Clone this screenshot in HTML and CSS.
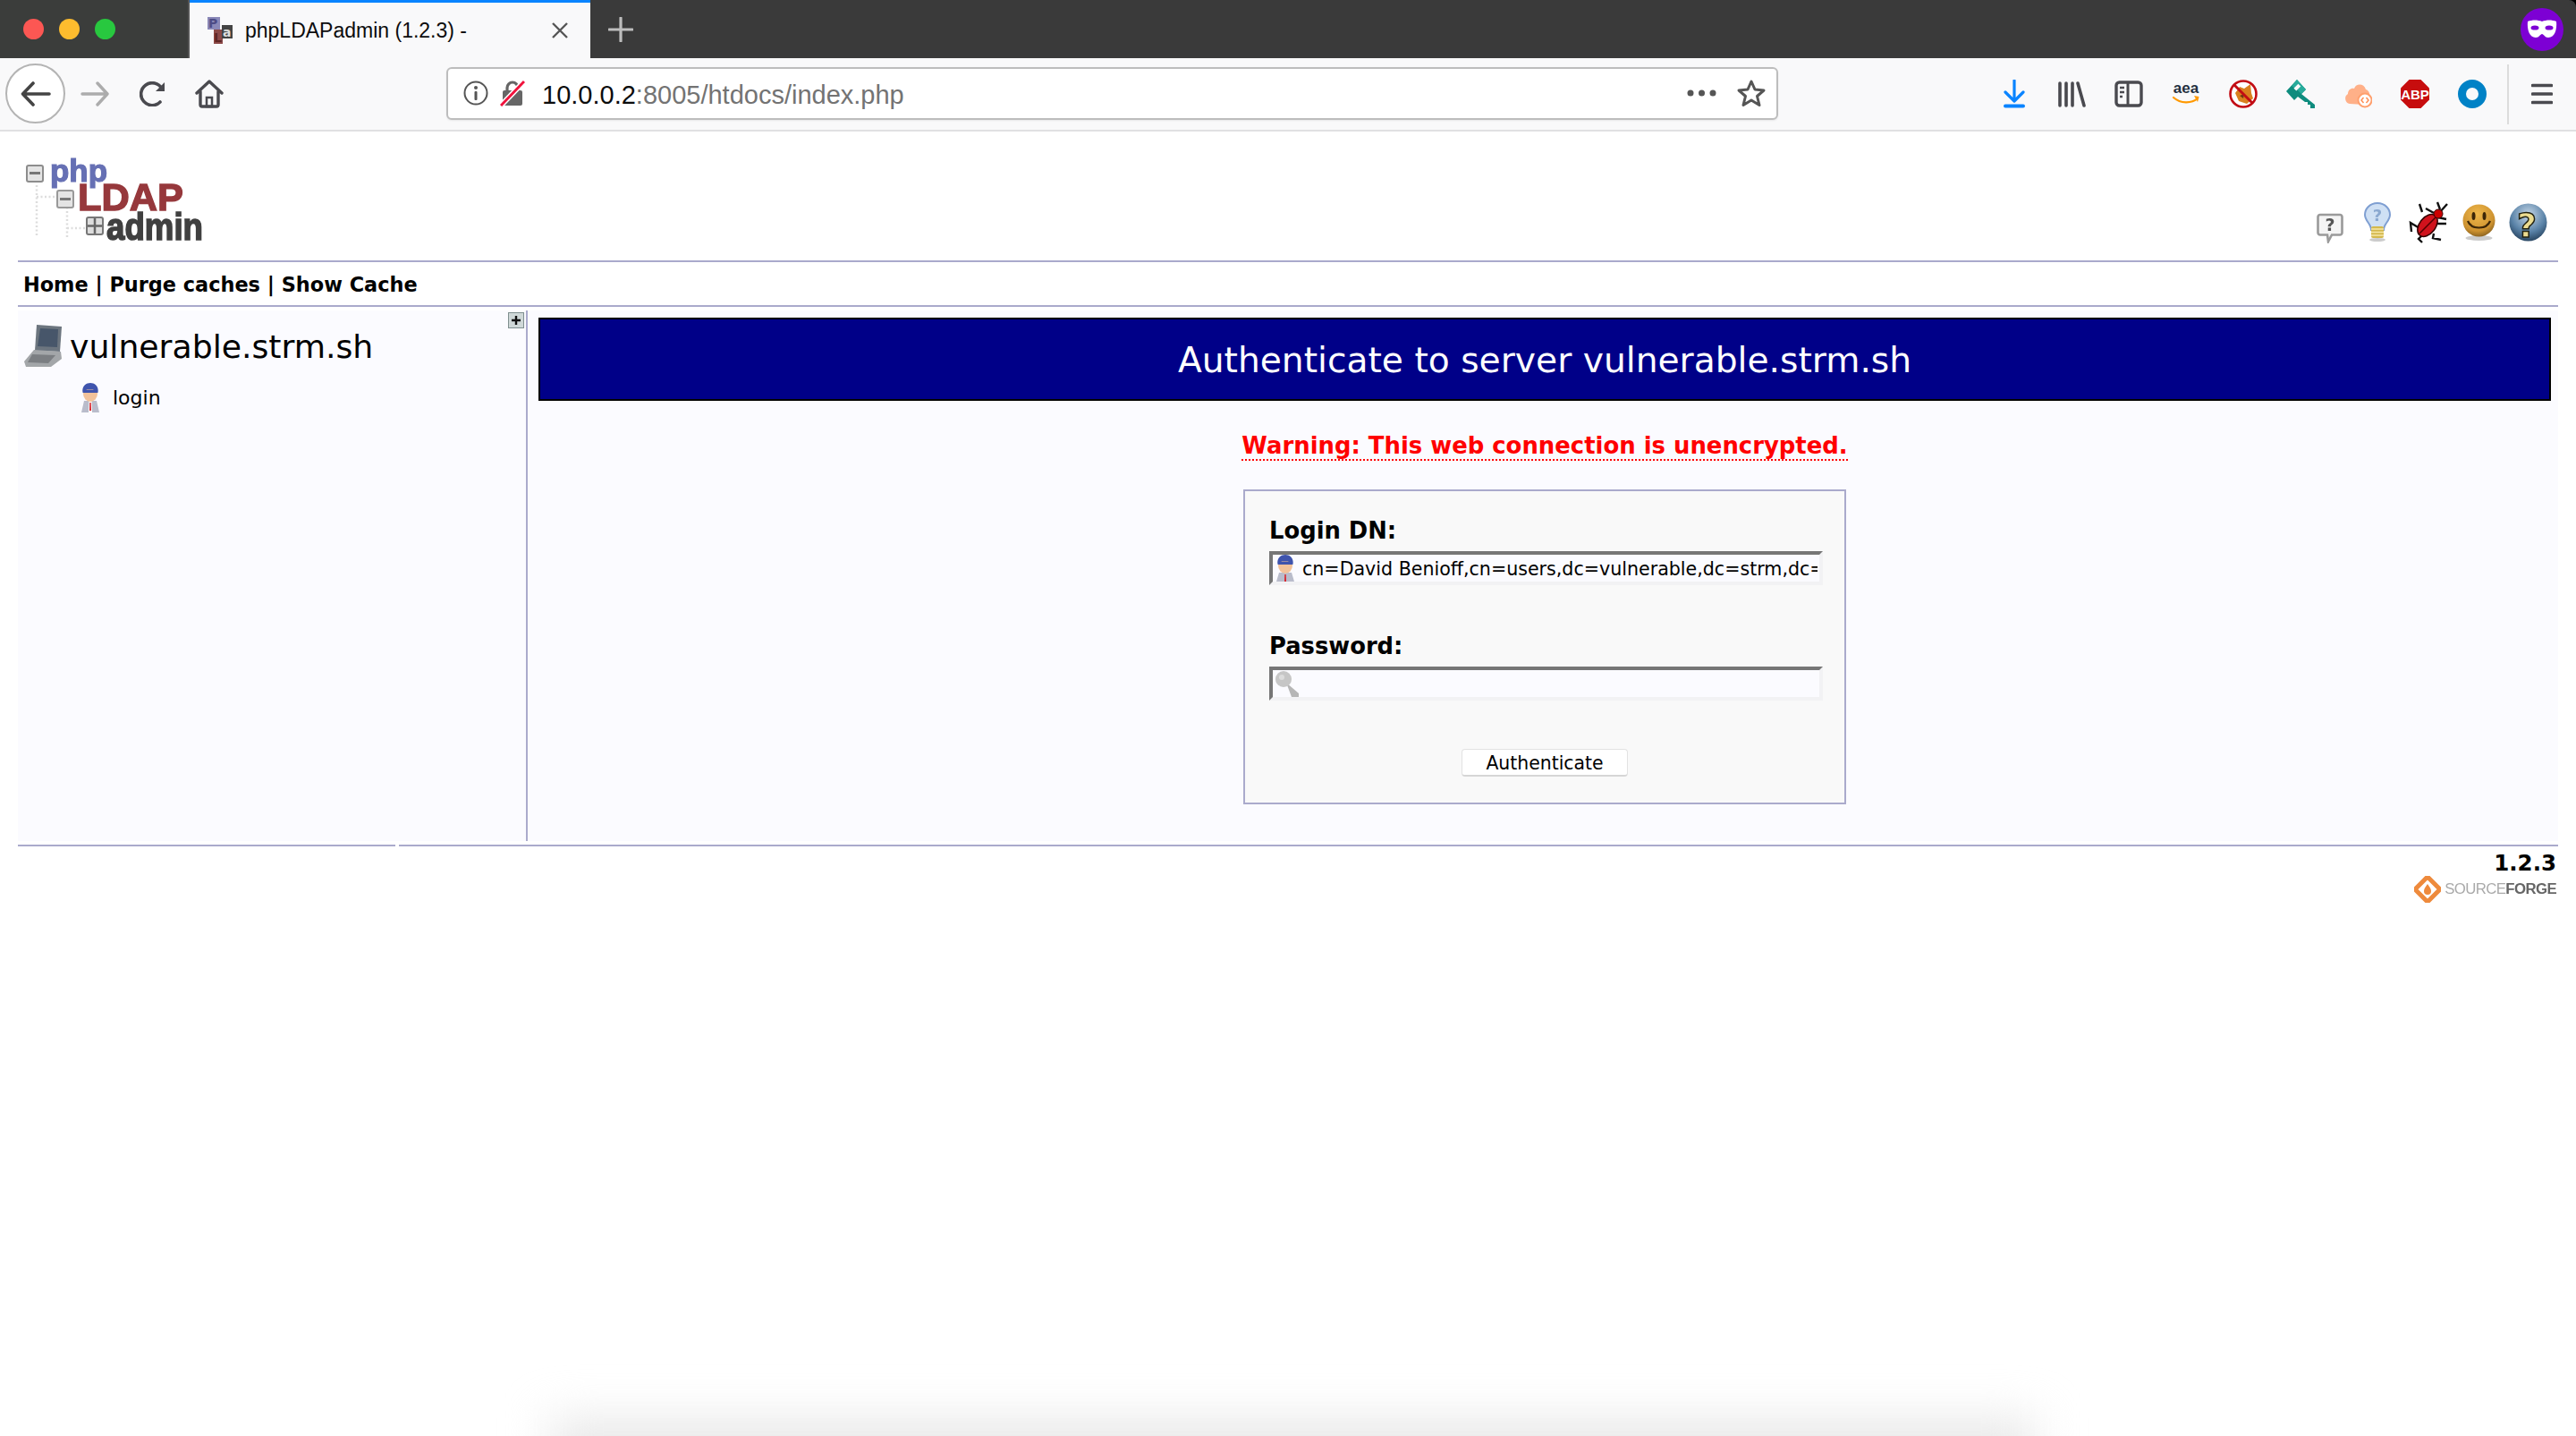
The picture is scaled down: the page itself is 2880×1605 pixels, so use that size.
FILE: index.html
```html
<!DOCTYPE html>
<html lang="en">
<head>
<meta charset="utf-8">
<title>phpLDAPadmin (1.2.3) -</title>
<link rel="stylesheet" href="styles.css">
</head>
<body>
<div class="window">
  <header class="tabbar">
    <div class="lights"><span class="light red"></span><span class="light yellow"></span><span class="light green"></span></div>
    <div class="tab">
      <svg class="favicon" width="28" height="30" viewBox="0 0 28 30"><rect x="0" y="0" width="14" height="14" fill="#8a88b8"/><text x="1" y="12" class="fav-t" fill="#4d4c86">P</text><rect x="7" y="14" width="10" height="16" fill="#8c4a48"/><text x="7" y="28" class="fav-t" fill="#5f2624">L</text><rect x="16" y="9" width="12" height="15" fill="#444"/><text x="17" y="22" class="fav-t" fill="#ddd">a</text></svg>
      <span class="tab-title">phpLDAPadmin (1.2.3) -</span>
      <svg class="tab-close" width="20" height="20" viewBox="0 0 20 20"><path d="M2 2 18 18M18 2 2 18" stroke="#555" stroke-width="2.4" fill="none"/></svg>
    </div>
    <svg class="newtab" width="28" height="28" viewBox="0 0 28 28"><path d="M14 1V27M1 14H27" stroke="#bdbdbd" stroke-width="3.2" stroke-linecap="round"/></svg>
    <svg class="mask" width="48" height="48" viewBox="0 0 48 48"><circle cx="24" cy="24" r="24" fill="#7d00d4"/><path d="M8 15c5-2 11-2 16 0 5-2 11-2 16 0 1 9-2 18-9 18-4 0-5-4-7-4s-3 4-7 4C10 33 7 24 8 15Z" fill="#fff"/><ellipse cx="16" cy="22" rx="4.5" ry="2.6" fill="#7d00d4"/><ellipse cx="32" cy="22" rx="4.5" ry="2.6" fill="#7d00d4"/></svg>
  </header>

  <nav class="toolbar">
    <div class="nav-buttons">
      <span class="back"><svg width="34" height="28" viewBox="0 0 34 28"><path d="M3 14H32M14 2 2.500 14 14 26" stroke="#444" stroke-width="3.600" fill="none" stroke-linecap="round" stroke-linejoin="round"/></svg></span>
      <svg class="ic-forward" width="32" height="28" viewBox="0 0 32 28"><path d="M30 14H2M19 2 30 14 19 26" stroke="#acacac" stroke-width="3.400" fill="none" stroke-linecap="round" stroke-linejoin="round"/></svg>
      <svg class="ic-reload" width="30" height="28" viewBox="0 0 30 28"><path d="M23 23a12.500 12.500 0 1 1 2-15" stroke="#4a4a4f" stroke-width="3.600" fill="none" stroke-linecap="round"/><path d="M28 1V11H18Z" fill="#4a4a4f"/></svg>
      <svg class="ic-home" width="32" height="32" viewBox="0 0 32 32"><path d="M2 15 16 2 30 15M6 13V28a2 2 0 0 0 2 2H24a2 2 0 0 0 2-2V13" stroke="#4a4a4f" stroke-width="3.400" fill="none" stroke-linecap="round" stroke-linejoin="round"/><rect x="13" y="20" width="6" height="10" fill="none" stroke="#4a4a4f" stroke-width="2.500"/></svg>
    </div>
    <div class="urlbar">
      <svg class="ic-info" width="28" height="28" viewBox="0 0 28 28"><circle cx="14" cy="14" r="12.500" fill="none" stroke="#555" stroke-width="2"/><circle cx="14" cy="8" r="2" fill="#555"/><rect x="12.500" y="12" width="3" height="10" rx="1" fill="#555"/></svg>
      <svg class="ic-lock" width="28" height="30" viewBox="0 0 28 30"><path d="M8 13V9a6 6 0 0 1 12 0v4" fill="none" stroke="#666" stroke-width="3.200"/><rect x="3" y="12" width="22" height="17" rx="2" fill="#666"/><path d="M1 29 27 2" stroke="#fff" stroke-width="6"/><path d="M1 29 27 2" stroke="#f0123c" stroke-width="3"/></svg>
      <span class="url"><span class="url-host">10.0.0.2</span>:8005/htdocs/index.php</span>
      <svg class="ic-dots" width="33" height="8" viewBox="0 0 33 8"><circle cx="4" cy="4" r="3.500" fill="#555"/><circle cx="16.500" cy="4" r="3.500" fill="#555"/><circle cx="29" cy="4" r="3.500" fill="#555"/></svg>
      <svg class="ic-star" width="34" height="32" viewBox="0 0 34 32"><path d="M17 3 21 12 31 13 23.500 19.500 26 29.500 17 24 8 29.500 10.500 19.500 3 13 13 12Z" fill="none" stroke="#555" stroke-width="3" stroke-linejoin="round"/></svg>
    </div>
    <div class="tools">
      <svg width="32" height="32" viewBox="0 0 32 32"><path d="M16 1V23M6 14 16 24 26 14" stroke="#0a84ff" stroke-width="3.200" fill="none" stroke-linecap="round" stroke-linejoin="round"/><rect x="4" y="27.500" width="24" height="4" rx="2" fill="#0a84ff"/></svg>
      <svg width="32" height="32" viewBox="0 0 32 32"><path d="M3 4V29M10 4V29M17 4V29M23 4 30 29" stroke="#4a4a4f" stroke-width="3.600" stroke-linecap="round"/></svg>
      <svg width="32" height="32" viewBox="0 0 32 32"><rect x="2" y="3" width="28" height="26" rx="3.500" fill="none" stroke="#4a4a4f" stroke-width="3.400"/><path d="M15 3V29" stroke="#4a4a4f" stroke-width="3"/><path d="M6 9H11M6 14H11M6 19H9" stroke="#4a4a4f" stroke-width="2.400"/></svg>
      <svg width="32" height="32" viewBox="0 0 32 32"><text x="16" y="15" class="aea">aea</text><path d="M2 20c8 7 20 7 27 1" stroke="#ff9900" stroke-width="2.200" fill="none" stroke-linecap="round"/><path d="M25 18 30.500 19 29 25Z" fill="#ff9900"/></svg>
      <svg width="32" height="32" viewBox="0 0 32 32"><circle cx="16" cy="16" r="14.500" fill="#fff" stroke="#c20c14" stroke-width="2.600"/><path d="M7 15 12 8 17 10 24 5 25 15 27 21 20 27 11 24Z" fill="#d9801f"/><path d="M12 18 17 16 16 21Z" fill="#6b3a10"/><path d="M6 6 26 26" stroke="#c20c14" stroke-width="3"/></svg>
      <svg width="32" height="32" viewBox="0 0 32 32"><path d="M0 13 12 0 22 11 17 16 32 28V32H27V28H24V25H21L13 19 9 23Z" fill="#0e8c7e"/><path d="M6 7 12 0 22 11 17 16 12 11Z" fill="#27ab9b"/><rect x="9" y="7" width="7" height="4" transform="rotate(-45 12 9)" fill="#f9f9fa"/></svg>
      <svg width="32" height="32" viewBox="0 0 32 32"><path d="M7 27a6 6 0 0 1-2-11c0-5 4-7 7-6 2-6 11-6 13 1 4 1 5 6 4 9l-6 8Z" fill="#ffb088"/><circle cx="24" cy="23" r="7.500" fill="#fff" stroke="#ffa06e" stroke-width="2"/><path d="M22.500 20 20 23l2.500 3M25.500 20l2.500 3-2.500 3" fill="none" stroke="#ff8f55" stroke-width="1.500"/></svg>
      <svg width="32" height="32" viewBox="0 0 32 32"><path d="M9.500 0H22.500L32 9.500V22.500L22.500 32H9.500L0 22.500V9.500Z" fill="#c70d0e"/><text x="16" y="22" class="abp">ABP</text></svg>
      <svg width="32" height="32" viewBox="0 0 32 32"><circle cx="16" cy="16" r="11.500" fill="none" stroke="#0082c6" stroke-width="9"/></svg>
      <span class="sep"></span>
      <svg class="hamb" width="24" height="24" viewBox="0 0 24 24"><path d="M1.500 2.500H22.500M1.500 12H22.500M1.500 21.500H22.500" stroke="#4a4a4f" stroke-width="3.600" stroke-linecap="round"/></svg>
    </div>
  </nav>

  <main class="page">
    <section class="pagehead">
      <div class="logo">
        <svg width="210" height="95" viewBox="0 0 210 95">
          <path d="M12 30V88M46 50V88M12 43H34M46 78H68" stroke="#ddd" stroke-width="2.500" stroke-dasharray="2 2.500" fill="none"/>
          <rect x="1" y="8" width="18" height="18" rx="2" fill="#e4e4e4" stroke="#8d8d8d" stroke-width="2"/><rect x="4" y="15" width="12" height="3" fill="#777"/>
          <rect x="35" y="36" width="18" height="19" rx="2" fill="#e4e4e4" stroke="#999" stroke-width="2"/><rect x="38" y="44" width="12" height="3" fill="#777"/>
          <rect x="68" y="66" width="18" height="19" rx="2" fill="#ddd" stroke="#777" stroke-width="2"/><path d="M77 67V84M69 75.500H85" stroke="#666" stroke-width="2.500"/>
          <text x="27" y="26" class="logo-php" textLength="64" lengthAdjust="spacingAndGlyphs">php</text>
          <text x="58" y="58" class="logo-ldap" textLength="118" lengthAdjust="spacingAndGlyphs">LDAP</text>
          <text x="90" y="91" class="logo-admin" textLength="108" lengthAdjust="spacingAndGlyphs">admin</text>
        </svg>
      </div>
      <div class="head-icons">
        <svg class="hi-bubble" width="30" height="34" viewBox="0 0 30 34"><path d="M4 2H26a2.500 2.500 0 0 1 2.500 2.500V22A2.500 2.500 0 0 1 26 24.500H17L13 32 12 24.500H4A2.500 2.500 0 0 1 1.500 22V4.500A2.500 2.500 0 0 1 4 2Z" fill="#f4f4f4" stroke="#9a9a9a" stroke-width="2.600"/><text x="15" y="20" class="hi-q">?</text></svg>
        <svg class="hi-bulb" width="30" height="44" viewBox="0 0 30 44"><path d="M15 1C6 1 1 8 1 14c0 7 7 10 7 17H22c0-7 7-10 7-17C29 8 24 1 15 1Z" fill="#cfe0f4" stroke="#7f9fd2" stroke-width="2"/><text x="15" y="21" class="hi-bq">?</text><rect x="8" y="27" width="14" height="13" rx="2" fill="#d4b94e"/><path d="M8 30H22M8 33.500H22M8 37H22" stroke="#f6e8a8" stroke-width="1.500"/><ellipse cx="15" cy="42" rx="9" ry="2" fill="#ccc"/></svg>
        <svg class="hi-bug" width="45" height="47" viewBox="0 0 45 47"><path d="M15 12 12 3M19 8 28 13M34 13 43 3M35 9 32 1M12 30 2 24 3 34M17 36 11 42 15 46M28 36 27 41 36 43M31 25 42 25M33 18 42 20" stroke="#111" stroke-width="2.400" fill="none"/><ellipse cx="21" cy="27" rx="9" ry="14" transform="rotate(38 21 27)" fill="#d0121c" stroke="#300" stroke-width="1.500"/><path d="M12 36 30 18" stroke="#500" stroke-width="1.500"/><circle cx="33" cy="14" r="5" fill="#c00" stroke="#300"/></svg>
        <svg class="hi-smile" width="37" height="41" viewBox="0 0 37 41"><ellipse cx="18.500" cy="38" rx="15" ry="3" fill="#ccc"/><defs><radialGradient id="sm" cx=".45" cy=".3" r=".75"><stop offset="0" stop-color="#f0b84a"/><stop offset=".7" stop-color="#cd9230"/><stop offset="1" stop-color="#7f5a1d"/></radialGradient></defs><circle cx="18.500" cy="18.500" r="18" fill="url(#sm)"/><ellipse cx="12.500" cy="13.500" rx="2" ry="4.500" fill="#3d2708"/><ellipse cx="24.500" cy="13.500" rx="2" ry="4.500" fill="#3d2708"/><path d="M6 19C10 29 27 29 31 19" stroke="#3d2708" stroke-width="2.200" fill="none"/></svg>
        <svg class="hi-help" width="43" height="44" viewBox="0 0 43 44"><defs><radialGradient id="hp" cx=".5" cy=".3" r=".75"><stop offset="0" stop-color="#c7d8e8"/><stop offset=".6" stop-color="#5a83a8"/><stop offset="1" stop-color="#1f3a55"/></radialGradient></defs><circle cx="21.500" cy="21.500" r="21" fill="url(#hp)"/><text x="20" y="38" class="hi-hq">?</text></svg>
      </div>
    </section>
    <div class="rule"></div>
    <div class="menu"><a>Home</a> | <a>Purge caches</a> | <a>Show Cache</a></div>
    <div class="rule"></div>
    <div class="panes">
      <aside class="tree">
        <button class="expand" type="button"><svg width="18" height="18" viewBox="0 0 18 18"><rect x=".5" y=".5" width="17" height="17" fill="#cfd8d8" stroke="#7f8f8f"/><path d="M9 4V14M4 9H14" stroke="#111" stroke-width="2.400"/></svg></button>
        <div class="server">
          <svg width="44" height="48" viewBox="0 0 44 48"><path d="M14 0 42 2 40 30 12 29Z" fill="#6c757f"/><path d="M18 4 38 5 37 25 15 24Z" fill="#47566a"/><path d="M11 28 41 30 42 38 30 47 2 47 0 41Z" fill="#a3a6a9"/><path d="M9 33 35 34 27 43 4 42Z" fill="#7b7e82"/></svg>
          <span class="server-name">vulnerable.strm.sh</span>
        </div>
        <div class="login-row">
          <svg class="person" width="24" height="33" viewBox="0 0 24 33"><path d="M2 33 5 20H19L22 33Z" fill="#b9bccb"/><path d="M10.500 20H13.500L14 33H10Z" fill="#fff"/><path d="M11.300 22H12.700L13 31H11Z" fill="#d8222a"/><ellipse cx="12" cy="12" rx="8" ry="9" fill="#f2c29a"/><path d="M3.500 11C2 3 8 0 12 0s10 3 8.500 11L15 7.500H8Z" fill="#3f54ad"/><path d="M4 8H20V11H4Z" fill="#3f54ad"/></svg>
          <span>login</span>
        </div>
      </aside>
      <section class="content">
        <h3 class="title">Authenticate to server vulnerable.strm.sh</h3>
        <div class="warning"><span>Warning: This web connection is unencrypted.</span></div>
        <form class="login-box">
          <label class="lbl">Login DN:</label>
          <div class="field">
            <input class="txt" type="text" value="cn=David Benioff,cn=users,dc=vulnerable,dc=strm,dc=sh">
            <svg class="field-ic" width="24" height="30" viewBox="0 0 24 30"><path d="M2 30 5 20H19L22 30Z" fill="#b9bccb"/><path d="M11.300 22H12.700L13 30H11Z" fill="#d8222a"/><ellipse cx="12" cy="12" rx="8" ry="9" fill="#f2c29a"/><path d="M3.500 11C2 3 8 0 12 0s10 3 8.500 11L15 7.500H8Z" fill="#3f54ad"/><path d="M4 8H20V11H4Z" fill="#3f54ad"/></svg>
          </div>
          <label class="lbl lbl-pw">Password:</label>
          <div class="field">
            <input class="txt" type="password">
            <svg class="field-ic" width="32" height="30" viewBox="0 0 32 30"><path d="M13 14 27 26V30H19Z" fill="#b6b6b6"/><circle cx="10" cy="10" r="9" fill="#c6c6c6"/><circle cx="8" cy="8" r="3" fill="#dcdcdc"/></svg>
          </div>
          <div class="actions"><button class="auth" type="button">Authenticate</button></div>
        </form>
      </section>
    </div>
    <div class="rule rule-foot"></div>
    <footer class="foot">
      <div class="version">1.2.3</div>
      <div class="sf">
        <svg width="30" height="30" viewBox="0 0 30 30"><path d="M15 1 29 15 15 29 1 15Z" fill="none" stroke="#ee8a3c" stroke-width="5"/><path d="M15 9c3 4 4 6 4 8a4 4 0 0 1-8 0c0-2 1-4 4-8Z" fill="#ee8a3c"/></svg>
        <span class="sf-t"><span class="sf-a">SOURCE</span><b class="sf-b">FORGE</b></span>
      </div>
    </footer>
    <div class="dock-shadow"></div>
  </main>
</div>
</body>
</html>
```
FILE: styles.css
```css
* { box-sizing: border-box; }
html, body { margin: 0; padding: 0; height: 1605px; overflow: hidden; background: #fff; }
body { font-family: "DejaVu Sans", Verdana, sans-serif; color: #000; }
.window { width: 2880px; height: 1605px; background: #000; display: flex; flex-direction: column; position: relative; overflow: hidden; }

.tabbar { height: 65px; background: #3a3a3a; border-radius: 8px 8px 0 0; display: flex; align-items: center; flex: none; }
.lights { width: 212px; height: 65px; background: #3b3d3b; border-right: 2px solid #555; display: flex; align-items: center; gap: 17px; padding-left: 26px; padding-bottom: 1px; flex: none; }
.light { width: 23px; height: 23px; border-radius: 50%; }
.red { background: #fc5753; }
.yellow { background: #fdbc2e; }
.green { background: #28c83f; }
.tab { width: 448px; height: 65px; background: #f9f9fa; border-top: 3px solid #0a84ff; display: flex; align-items: center; padding-left: 20px; flex: none; }
.favicon { flex: none; margin-right: 14px; }
.fav-t { font: bold 14px "DejaVu Sans", sans-serif; }
.tab-title { font: 23px "Liberation Sans", sans-serif; color: #0c0c0d; flex: none; width: 342px; }
.tab-close { flex: none; margin-top: -1px; }
.newtab { margin-left: 20px; flex: none; }
.mask { margin-left: auto; margin-right: 14px; flex: none; }

.toolbar { height: 82px; background: #f9f9fa; border-bottom: 2px solid #e0e0e2; display: flex; align-items: center; flex: none; }
.nav-buttons { display: flex; align-items: center; width: 499px; padding-left: 6px; flex: none; }
.back { width: 67px; height: 67px; border-radius: 50%; background: #fff; border: 2px solid #b4b4b4; display: flex; align-items: center; justify-content: center; flex: none; margin-top: -1px; }
.ic-forward { margin-left: 17px; }
.ic-reload { margin-left: 34px; }
.ic-home { margin-left: 32px; }
.urlbar { width: 1489px; height: 59px; background: #fff; border: 2px solid #bdbdbd; border-radius: 6px; display: flex; align-items: center; padding-left: 17px; flex: none; margin-top: -2px; box-shadow: 0 1px 2px rgba(0,0,0,.08); }
.ic-lock { margin-left: 13px; }
.url { font: 29px/34px "Liberation Sans", sans-serif; color: #737373; margin-left: 19px; flex: none; width: 1280px; white-space: nowrap; padding-top: 3px; }
.url-host { color: #0c0c0d; }
.ic-dots { flex: none; margin-right: 22px; }
.tools { display: flex; align-items: center; gap: 32px; margin-left: 248px; flex: none; }
.tools svg { flex: none; }
.aea { font: bold 17px "Liberation Sans", sans-serif; fill: #232f3e; text-anchor: middle; }
.abp { font: bold 15px "Liberation Sans", sans-serif; fill: #fff; text-anchor: middle; }
.sep { width: 2px; height: 67px; background: #dcdcdc; margin-left: -9px; flex: none; }
.hamb { margin-left: -7px; }

.page { flex: 1; background: #fff; padding: 0 20px; position: relative; }
.pagehead { height: 144px; display: flex; justify-content: space-between; align-items: flex-end; }
.logo { margin-left: 9px; height: 114px; display: flex; align-items: flex-start; }
.logo svg { filter: blur(.7px); overflow: visible; }
.logo-php { font: bold 35px "Liberation Sans", sans-serif; fill: #6670b4; stroke: #6670b4; stroke-width: 1.2; }
.logo-ldap { font: bold 43px "Liberation Sans", sans-serif; fill: #96383c; stroke: #96383c; stroke-width: 1.4; }
.logo-admin { font: bold 42px "Liberation Sans", sans-serif; fill: #404040; stroke: #404040; stroke-width: 1.6; }
.head-icons { display: flex; align-items: flex-start; height: 66px; margin-right: 12px; }
.head-icons svg { flex: none; filter: blur(.4px); }
.hi-bubble { margin-top: 13px; }
.hi-bulb { margin-left: 23px; margin-top: 1px; }
.hi-bug { margin-left: 20px; }
.hi-smile { margin-left: 15px; margin-top: 3px; }
.hi-help { margin-left: 15px; margin-top: 2px; }
.hi-q { font: bold 19px "DejaVu Sans", sans-serif; fill: #555; text-anchor: middle; }
.hi-bq { font: bold 18px "DejaVu Sans", sans-serif; fill: #8aa8d0; text-anchor: middle; }
.hi-hq { font: bold 38px "DejaVu Sans", sans-serif; fill: #ecdc90; stroke: #221; stroke-width: 1.500; text-anchor: middle; }

.rule { height: 2px; background: #aaaacc; }
.menu { height: 48px; line-height: 50px; padding-left: 6px; font-size: 22.400px; font-weight: bold; white-space: pre; }

.panes { display: flex; margin-top: 4px; height: 593px; background: #fbfbff; }
.tree { width: 570px; border-right: 2px solid #aaaacc; position: relative; padding: 16px 0 0 7px; flex: none; }
.expand { position: absolute; top: 2px; right: 2px; padding: 0; border: 0; background: none; width: 18px; height: 18px; display: block; }
.expand svg { display: block; }
.server { display: flex; align-items: center; gap: 7px; height: 48px; }
.server svg { flex: none; filter: blur(.4px); }
.server-name { font-size: 36.200px; }
.login-row { display: flex; align-items: center; margin: 17px 0 0 62px; gap: 13px; font-size: 22px; }
.person { filter: blur(.4px); }
.content { flex: 1; padding: 8px 8px 0 12px; min-width: 0; }
.title { margin: 0; height: 93px; padding-top: 2px; background: #000088; border: 2px solid #000; color: #fff; display: flex; align-items: center; justify-content: center; font-size: 39.200px; font-weight: normal; }
.warning { text-align: center; margin-top: 34px; height: 33px; line-height: 33px; font-size: 25.900px; font-weight: bold; color: #f00; }
.warning span { border-bottom: 2px dotted #f00; }
.login-box { width: 674px; height: 352px; margin: 32px auto 0; background: #f9f9f9; border: 2px solid #aaaacc; padding: 27px 27px 0; display: flex; flex-direction: column; }
.lbl { font-size: 25.800px; font-weight: bold; height: 40px; line-height: 34px; flex: none; }
.lbl-pw { margin-top: 42px; height: 49px; line-height: 52px; }
.field { position: relative; width: 619px; height: 38px; flex: none; }
.txt { width: 100%; height: 100%; display: block; margin: 0; padding: 2px 2px 0 33px; border-style: solid; border-width: 4px; border-color: #767676 #f2f2f4 #f2f2f4 #767676; background: #fbfbff; font: 20.600px "DejaVu Sans", sans-serif; color: #000; outline: 0; }
.field-ic { position: absolute; left: 6px; top: 4px; }
.actions { display: flex; justify-content: center; margin-top: 54px; }
.auth { width: 186px; height: 31px; background: #fff; border: 1px solid #e2e2e2; border-bottom: 2px solid #d6d6d6; border-radius: 4px; font: 20.400px "DejaVu Sans", sans-serif; color: #000; padding: 1px 0 0; }

.rule-foot { margin-top: 4px; background: linear-gradient(to right, #aaaacc 422px, #fff 422px, #fff 426px, #aaaacc 426px); }
.foot { display: flex; flex-direction: column; align-items: flex-end; padding-right: 2px; }
.version { font-size: 24.500px; font-weight: bold; line-height: 30px; margin-top: 4px; }
.sf { display: flex; align-items: center; gap: 4px; margin-top: -1px; filter: blur(.5px); }
.sf-t { font: 16.800px "Liberation Sans", sans-serif; letter-spacing: -.6px; }
.sf-a { color: #aaa; }
.sf-b { color: #666; }
.dock-shadow { position: absolute; left: 615px; top: 1438px; width: 1660px; height: 100px; background: #e9e9e9; filter: blur(25px); }
```
